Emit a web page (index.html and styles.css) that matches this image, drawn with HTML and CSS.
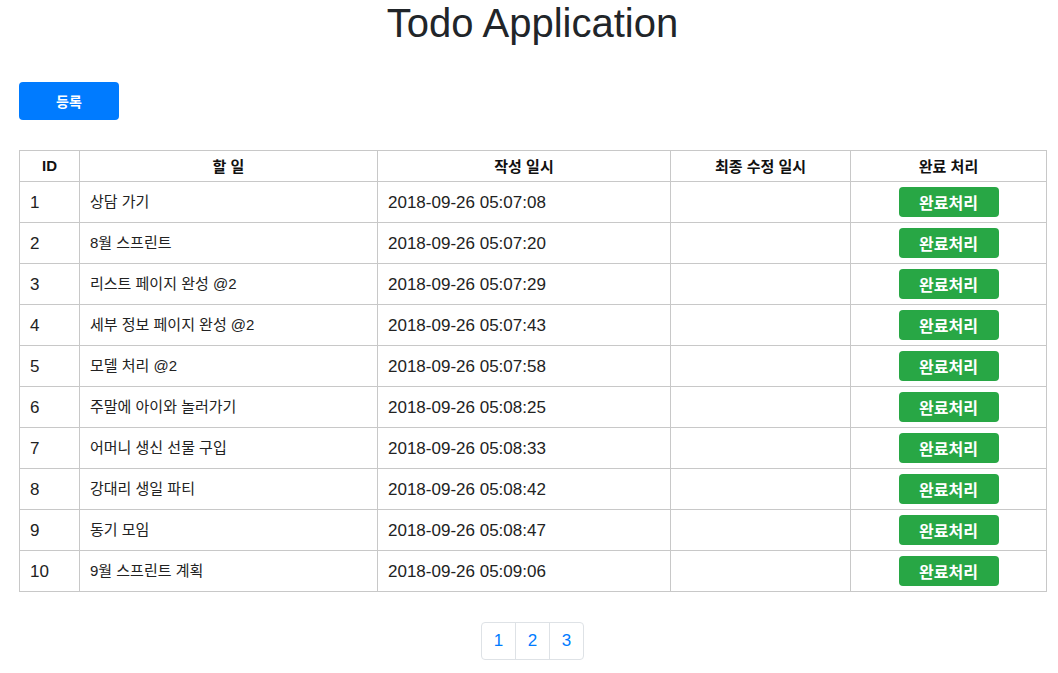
FILE: index.html
```html
<!DOCTYPE html>
<html lang="ko">
<head>
<meta charset="utf-8">
<title>Todo Application</title>
<link rel="stylesheet" href="styles.css">
</head>
<body>
<div class="page">
  <h1 class="title">Todo Application</h1>
  <div class="toolbar"><button class="btn btn-primary">등록</button></div>
  <table class="todo-table">
    <colgroup>
      <col class="c-id"><col class="c-task"><col class="c-created"><col class="c-updated"><col class="c-done">
    </colgroup>
    <thead>
      <tr><th>ID</th><th>할 일</th><th>작성 일시</th><th>최종 수정 일시</th><th>완료 처리</th></tr>
    </thead>
    <tbody>
      <tr><td class="num">1</td><td class="task">상담 가기</td><td class="num">2018-09-26 05:07:08</td><td></td><td class="act"><button class="btn btn-success">완료처리</button></td></tr>
      <tr><td class="num">2</td><td class="task">8월 스프린트</td><td class="num">2018-09-26 05:07:20</td><td></td><td class="act"><button class="btn btn-success">완료처리</button></td></tr>
      <tr><td class="num">3</td><td class="task">리스트 페이지 완성 @2</td><td class="num">2018-09-26 05:07:29</td><td></td><td class="act"><button class="btn btn-success">완료처리</button></td></tr>
      <tr><td class="num">4</td><td class="task">세부 정보 페이지 완성 @2</td><td class="num">2018-09-26 05:07:43</td><td></td><td class="act"><button class="btn btn-success">완료처리</button></td></tr>
      <tr><td class="num">5</td><td class="task">모델 처리 @2</td><td class="num">2018-09-26 05:07:58</td><td></td><td class="act"><button class="btn btn-success">완료처리</button></td></tr>
      <tr><td class="num">6</td><td class="task">주말에 아이와 놀러가기</td><td class="num">2018-09-26 05:08:25</td><td></td><td class="act"><button class="btn btn-success">완료처리</button></td></tr>
      <tr><td class="num">7</td><td class="task">어머니 생신 선물 구입</td><td class="num">2018-09-26 05:08:33</td><td></td><td class="act"><button class="btn btn-success">완료처리</button></td></tr>
      <tr><td class="num">8</td><td class="task">강대리 생일 파티</td><td class="num">2018-09-26 05:08:42</td><td></td><td class="act"><button class="btn btn-success">완료처리</button></td></tr>
      <tr><td class="num">9</td><td class="task">동기 모임</td><td class="num">2018-09-26 05:08:47</td><td></td><td class="act"><button class="btn btn-success">완료처리</button></td></tr>
      <tr><td class="num">10</td><td class="task">9월 스프린트 계획</td><td class="num">2018-09-26 05:09:06</td><td></td><td class="act"><button class="btn btn-success">완료처리</button></td></tr>
    </tbody>
  </table>
  <nav class="pager">
    <a class="page-link" href="#">1</a><a class="page-link" href="#">2</a><a class="page-link" href="#">3</a>
  </nav>
</div>
</body>
</html>
```

FILE: styles.css
```css
* { box-sizing: border-box; }
html, body { margin: 0; padding: 0; background: #fff; }
body {
  font-family: "Liberation Sans", "Noto Sans CJK KR", sans-serif;
  font-size: 16px;
  color: #212529;
}
.page { padding: 0 12px 0 19px; }
.title {
  margin: 0;
  padding-top: 1px;
  text-align: center;
  font-size: 40px;
  font-weight: 400;
  line-height: 44px;
  color: #212529;
}
.toolbar { margin-top: 37px; height: 38px; }
.btn {
  border: none;
  color: #fff;
  font-family: "Liberation Sans", "Noto Sans CJK KR", sans-serif;
  font-weight: 700;
  border-radius: 4px;
  cursor: pointer;
}
.btn-primary {
  background: #007bff;
  width: 100px;
  height: 38px;
  font-size: 14px;
}
.btn-success {
  background: #28a745;
  width: 100px;
  height: 30px;
  font-size: 16px;
  display: block;
  margin: 0 auto;
  padding: 0;
}
.todo-table {
  margin-top: 30px;
  width: 1027px;
  border-collapse: collapse;
  border: 1px solid #999;
  table-layout: fixed;
}
.c-id { width: 60px; }
.c-task { width: 298px; }
.c-created { width: 293px; }
.c-updated { width: 180px; }
.c-done { width: 196px; }
.todo-table th, .todo-table td {
  border: 1px solid #c8c8c8;
  padding: 0 10px 2px;
}
.todo-table th {
  height: 31px;
  font-size: 15px;
  font-weight: 700;
  text-align: center;
  color: #111;
}
.todo-table td {
  height: 41px;
  font-size: 15px;
  color: #222;
  white-space: nowrap;
}
.todo-table td.num { font-size: 17px; padding: 1px 10px 0; }
.todo-table td.task { padding: 0 10px 3px; }
.todo-table td.act { padding: 0; }
.pager {
  display: flex;
  justify-content: center;
  margin-top: 30px;
}
.page-link {
  display: block;
  width: 35px;
  height: 38px;
  line-height: 36px;
  text-align: center;
  color: #007bff;
  text-decoration: none;
  border: 1px solid #dee2e6;
  margin-left: -1px;
  font-size: 17px;
}
.page-link:first-child { border-radius: 4px 0 0 4px; margin-left: 0; }
.page-link:last-child { border-radius: 0 4px 4px 0; }
```
